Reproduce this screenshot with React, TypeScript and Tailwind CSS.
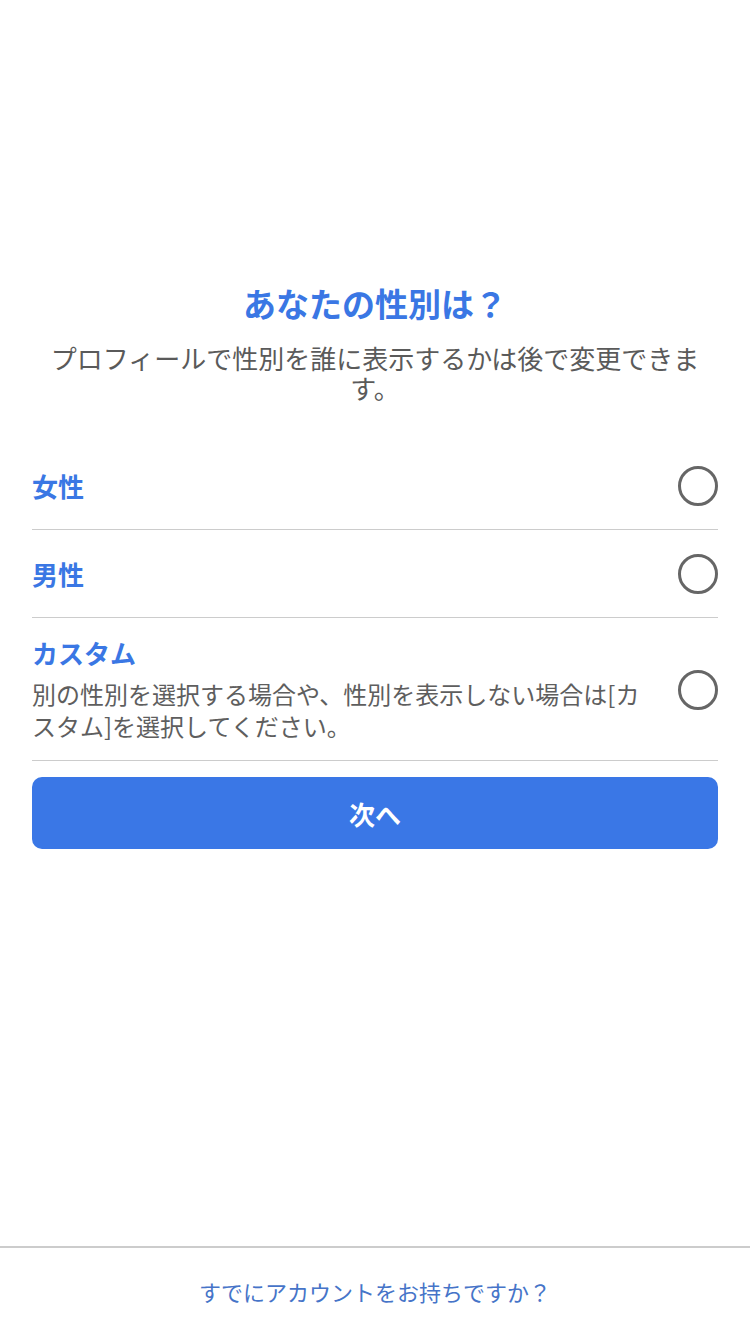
import React from "react";

const font = { fontFamily: '"Noto Sans CJK JP", "Noto Sans", sans-serif' };

function Radio() {
  return <div className="w-[40px] h-[40px] rounded-full border-[3px] border-[#666666] shrink-0" />;
}

export default function App() {
  return (
    <div className="w-[750px] h-[1334px] bg-white flex flex-col" style={font}>
      <div className="flex-1 flex flex-col px-[32px] pt-[281px]">
        <h1 className="text-center text-[33px] leading-[44px] font-bold text-[#3a77e4]">あなたの性別は？</h1>
        <p className="mt-[18px] text-center text-[26px] leading-[30px] text-[#5a5a5a] px-[16px]">
          プロフィールで性別を誰に表示するかは後で変更できます。
        </p>
        <div className="mt-[39px] flex flex-col">
          <div className="h-[88px] flex items-center justify-between border-b border-[#cccccc]">
            <span className="text-[26px] font-bold text-[#3a77e4]">女性</span>
            <Radio />
          </div>
          <div className="h-[88px] flex items-center justify-between border-b border-[#cccccc]">
            <span className="text-[26px] font-bold text-[#3a77e4]">男性</span>
            <Radio />
          </div>
          <div className="flex items-center justify-between border-b border-[#cccccc] pt-[17px] pb-[18px]">
            <div className="flex flex-col w-[620px]">
              <span className="text-[26px] leading-[36px] font-bold text-[#3a77e4]">カスタム</span>
              <span className="mt-[7px] text-[24px] leading-[32px] text-[#5e5e5e]">
                別の性別を選択する場合や、性別を表示しない場合は[カスタム]を選択してください。
              </span>
            </div>
            <div className="mt-[3px]">
              <Radio />
            </div>
          </div>
        </div>
        <button className="mt-[16px] h-[72px] w-full rounded-[10px] bg-[#3a77e6] text-white text-[26px] font-bold">
          次へ
        </button>
      </div>
      <div className="h-[88px] border-t-2 border-[#cccccc] flex items-center justify-center">
        <span className="text-[22px] text-[#4674c8]">すでにアカウントをお持ちですか？</span>
      </div>
    </div>
  );
}
